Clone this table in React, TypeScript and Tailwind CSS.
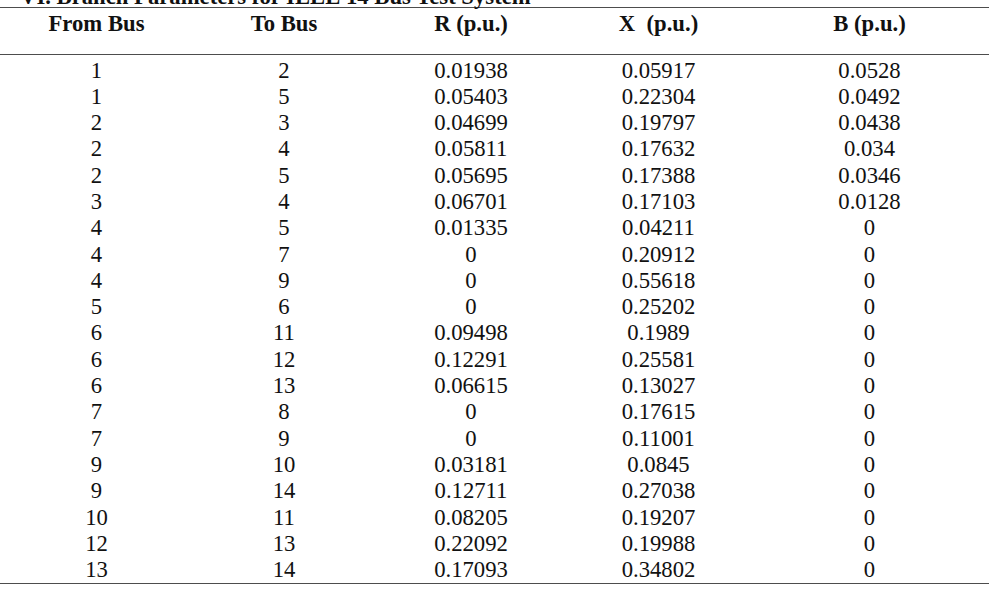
const ROWS: [string, string, string, string, string][] = [
  ['1', '2', '0.01938', '0.05917', '0.0528'],
  ['1', '5', '0.05403', '0.22304', '0.0492'],
  ['2', '3', '0.04699', '0.19797', '0.0438'],
  ['2', '4', '0.05811', '0.17632', '0.034'],
  ['2', '5', '0.05695', '0.17388', '0.0346'],
  ['3', '4', '0.06701', '0.17103', '0.0128'],
  ['4', '5', '0.01335', '0.04211', '0'],
  ['4', '7', '0', '0.20912', '0'],
  ['4', '9', '0', '0.55618', '0'],
  ['5', '6', '0', '0.25202', '0'],
  ['6', '11', '0.09498', '0.1989', '0'],
  ['6', '12', '0.12291', '0.25581', '0'],
  ['6', '13', '0.06615', '0.13027', '0'],
  ['7', '8', '0', '0.17615', '0'],
  ['7', '9', '0', '0.11001', '0'],
  ['9', '10', '0.03181', '0.0845', '0'],
  ['9', '14', '0.12711', '0.27038', '0'],
  ['10', '11', '0.08205', '0.19207', '0'],
  ['12', '13', '0.22092', '0.19988', '0'],
  ['13', '14', '0.17093', '0.34802', '0'],
]

const HEADERS = ['From Bus', 'To Bus', 'R (p.u.)', 'X  (p.u.)', 'B (p.u.)']

const cols = 'grid grid-cols-[193px_182px_192px_183px_239px]'

export default function App() {
  return (
    <div
      className="w-[998px] h-[590px] overflow-hidden bg-white text-[#111] text-[22.7px] leading-[26.3px]"
      style={{ fontFamily: '"Liberation Serif", "Times New Roman", serif' }}
    >
      {/* caption, mostly cropped above the frame */}
      <div className="-mt-[16px] h-[22.5px] pl-[20px] font-bold whitespace-nowrap">
        VI. Branch Parameters for IEEE 14 Bus Test System
      </div>
      <div className="w-[989px] border-t-[1.5px] border-[#4d4d4d]">
        <div className={`${cols} h-[47.5px] pt-[3px] border-b-[1.5px] border-[#4d4d4d] font-bold`}>
          {HEADERS.map((h) => (
            <div key={h} className="text-center whitespace-pre">{h}</div>
          ))}
        </div>
        <div className="pt-[2.5px] border-b-[1.5px] border-[#4d4d4d]">
          {ROWS.map((row, i) => (
            <div key={i} className={`${cols} h-[26.3px]`}>
              {row.map((cell, j) => (
                <div key={j} className="text-center">{cell}</div>
              ))}
            </div>
          ))}
        </div>
      </div>
    </div>
  )
}
